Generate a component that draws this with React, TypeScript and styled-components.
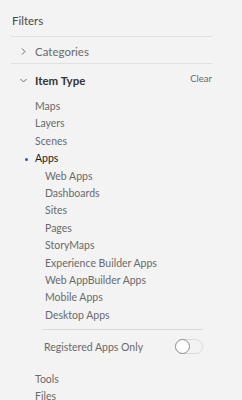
import React, { useState } from "react";
import styled, { createGlobalStyle } from "styled-components";

const GlobalStyle = createGlobalStyle`
  html, body {
    margin: 0;
    padding: 0;
    background: #f3f3f3;
  }
  body {
    font-family: Lato, "Open Sans", sans-serif;
    color: #6a6a6a;
  }
`;

const Panel = styled.aside`
  width: 201px;
  padding-left: 11px;
  display: flex;
  flex-direction: column;
`;

const Title = styled.h2`
  margin: 0;
  height: 37px;
  display: flex;
  align-items: center;
  padding: 5px 0 0 1px;
  box-sizing: border-box;
  font-size: 11.5px;
  font-weight: 400;
  color: #4a4a4a;
  border-bottom: 1px solid #e0e0e0;
`;

const Section = styled.section<{ $last?: boolean }>`
  border-bottom: ${(p) => (p.$last ? "none" : "1px solid #e0e0e0")};
`;

const SectionHead = styled.div<{ $tall?: boolean }>`
  height: ${(p) => (p.$tall ? "32px" : "26px")};
  display: flex;
  align-items: center;
  gap: 8px;
  padding-left: 9px;
  padding-top: ${(p) => (p.$tall ? "0" : "3px")};
  box-sizing: border-box;
`;

const Chevron = styled.svg`
  width: 7px;
  height: 7px;
  flex: none;
  stroke: #6a6a6a;
  fill: none;
  stroke-width: 1;
`;

const HeadLabel = styled.span<{ $bold?: boolean }>`
  flex: 1;
  font-size: 11.5px;
  font-weight: ${(p) => (p.$bold ? 700 : 400)};
  color: ${(p) => (p.$bold ? "#353535" : "#6a6a6a")};
`;

const ClearBtn = styled.button`
  border: none;
  background: none;
  padding: 0;
  margin-top: -4px;
  font-family: inherit;
  font-size: 9.5px;
  color: #6a6a6a;
  cursor: pointer;
`;

const List = styled.ul<{ $indent: number; $top?: number }>`
  list-style: none;
  margin: ${(p) => p.$top ?? 0}px 0 0 0;
  padding: 0 0 0 ${(p) => p.$indent}px;
`;

const Item = styled.li<{ $active?: boolean }>`
  position: relative;
  height: 17.4px;
  line-height: 17.4px;
  font-size: 10.5px;
  color: ${(p) => (p.$active ? "#1a1a1a" : "#6a6a6a")};
  &::before {
    content: "";
    display: ${(p) => (p.$active ? "block" : "none")};
    position: absolute;
    left: -10px;
    top: 7.5px;
    width: 3px;
    height: 3px;
    border-radius: 50%;
    background: #2c5ea8;
  }
`;

const Divider = styled.hr`
  margin: 5px 9px 0 -3px;
  border: none;
  border-top: 1px solid #dcdcdc;
`;

const ToggleRow = styled.label`
  height: 33px;
  display: flex;
  align-items: center;
  justify-content: space-between;
  margin-right: 9px;
  margin-left: -1px;
  font-size: 10.5px;
  color: #6a6a6a;
`;

const Track = styled.span<{ $on: boolean }>`
  width: 28px;
  height: 15px;
  box-sizing: border-box;
  border-radius: 8px;
  border: 1px solid #dadada;
  background: ${(p) => (p.$on ? "#2c5ea8" : "#f3f3f3")};
  display: flex;
  align-items: center;
  justify-content: ${(p) => (p.$on ? "flex-end" : "flex-start")};
  cursor: pointer;
`;

const Knob = styled.span`
  width: 15px;
  height: 15px;
  margin: -1px;
  box-sizing: border-box;
  border-radius: 50%;
  border: 1.3px solid #8c8c8c;
  background: #ffffff;
`;

const itemTypes = ["Maps", "Layers", "Scenes", "Apps"];
const appTypes = [
  "Web Apps",
  "Dashboards",
  "Sites",
  "Pages",
  "StoryMaps",
  "Experience Builder Apps",
  "Web AppBuilder Apps",
  "Mobile Apps",
  "Desktop Apps",
];

export default function App() {
  const [registered, setRegistered] = useState(false);

  return (
    <>
      <GlobalStyle />
      <Panel>
        <Title>Filters</Title>
        <Section>
          <SectionHead>
            <Chevron viewBox="0 0 7 7">
              <path d="M2 0.5 L5 3.5 L2 6.5" />
            </Chevron>
            <HeadLabel>Categories</HeadLabel>
          </SectionHead>
        </Section>
        <Section $last>
          <SectionHead $tall>
            <Chevron viewBox="0 0 7 7">
              <path d="M0.5 2 L3.5 5 L6.5 2" />
            </Chevron>
            <HeadLabel $bold>Item Type</HeadLabel>
            <ClearBtn>Clear</ClearBtn>
          </SectionHead>
          <List $indent={24} $top={2}>
            {itemTypes.map((t) => (
              <Item key={t} $active={t === "Apps"}>
                {t}
              </Item>
            ))}
          </List>
          <List $indent={34}>
            {appTypes.map((t) => (
              <Item key={t}>{t}</Item>
            ))}
            <Divider />
            <ToggleRow onClick={() => setRegistered(!registered)}>
              Registered Apps Only
              <Track $on={registered}>
                <Knob />
              </Track>
            </ToggleRow>
          </List>
          <List $indent={24} $top={8}>
            <Item>Tools</Item>
            <Item>Files</Item>
          </List>
        </Section>
      </Panel>
    </>
  );
}
